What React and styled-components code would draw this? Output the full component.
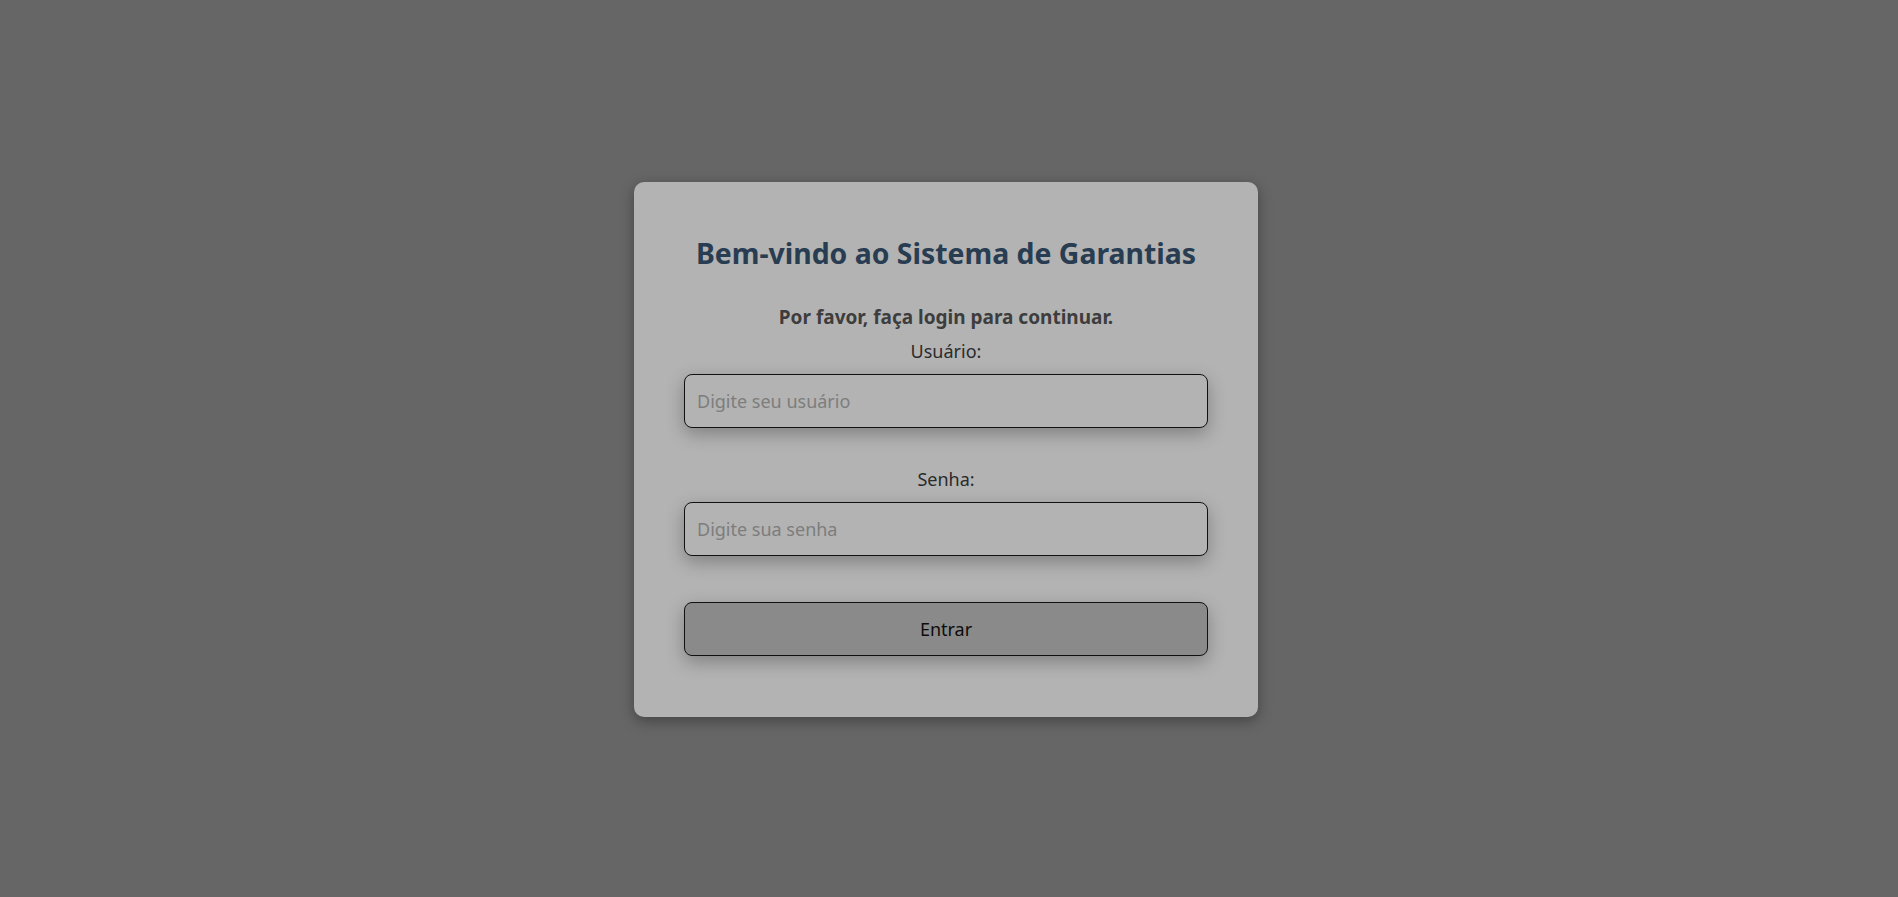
import React, { useState } from 'react';
import styled, { createGlobalStyle } from 'styled-components';

const GlobalStyle = createGlobalStyle`
  html, body {
    margin: 0;
    padding: 0;
    background: #666666;
    font-family: "Noto Sans", "Open Sans", sans-serif;
  }
`;

const Page = styled.main`
  min-height: 897px;
  box-sizing: border-box;
  padding: 2px 6px 0 0;
  display: flex;
  align-items: center;
  justify-content: center;
`;

const Card = styled.div`
  width: 624px;
  box-sizing: border-box;
  padding: 54px 50px 61px;
  background: #b3b3b3;
  border-radius: 10px;
  box-shadow: 0 4px 14px rgba(0, 0, 0, 0.35);
  text-align: center;
`;

const Title = styled.h1`
  margin: 0 0 35px;
  font-size: 28.4px;
  line-height: 34px;
  font-weight: 700;
  color: #283c52;
`;

const Subtitle = styled.p`
  margin: 0 0 10px;
  font-size: 19px;
  line-height: 24px;
  font-weight: 700;
  color: #3d3d3d;
`;

const Form = styled.form`
  display: flex;
  flex-direction: column;
`;

const Label = styled.label`
  display: block;
  margin-bottom: 11px;
  font-size: 18px;
  line-height: 24px;
  color: #2b2b2b;
`;

const Input = styled.input`
  box-sizing: border-box;
  width: 100%;
  height: 54px;
  margin-bottom: ${(p) => p.$gap}px;
  padding: 0 12px;
  border: 1px solid #111;
  border-radius: 8px;
  background: #b3b3b3;
  box-shadow: 0 6px 18px rgba(0, 0, 0, 0.28);
  font-family: inherit;
  font-size: 18px;
  color: #222;
  outline: none;

  &::placeholder {
    color: #7d7d7d;
  }
`;

const Button = styled.button`
  box-sizing: border-box;
  width: 100%;
  height: 54px;
  border: 1px solid #111;
  border-radius: 8px;
  background: #8a8a8a;
  box-shadow: 0 6px 18px rgba(0, 0, 0, 0.28);
  font-family: inherit;
  font-size: 18px;
  color: #0d0d0d;
  cursor: pointer;
`;

export default function App() {
  const [user, setUser] = useState('');
  const [pass, setPass] = useState('');

  return (
    <>
      <GlobalStyle />
      <Page>
        <Card>
          <Title>Bem-vindo ao Sistema de Garantias</Title>
          <Subtitle>Por favor, faça login para continuar.</Subtitle>
          <Form onSubmit={(e) => e.preventDefault()}>
            <Label htmlFor="usuario">Usuário:</Label>
            <Input
              id="usuario"
              $gap={39}
              placeholder="Digite seu usuário"
              value={user}
              onChange={(e) => setUser(e.target.value)}
            />
            <Label htmlFor="senha">Senha:</Label>
            <Input
              id="senha"
              type="password"
              $gap={46}
              placeholder="Digite sua senha"
              value={pass}
              onChange={(e) => setPass(e.target.value)}
            />
            <Button type="submit">Entrar</Button>
          </Form>
        </Card>
      </Page>
    </>
  );
}
